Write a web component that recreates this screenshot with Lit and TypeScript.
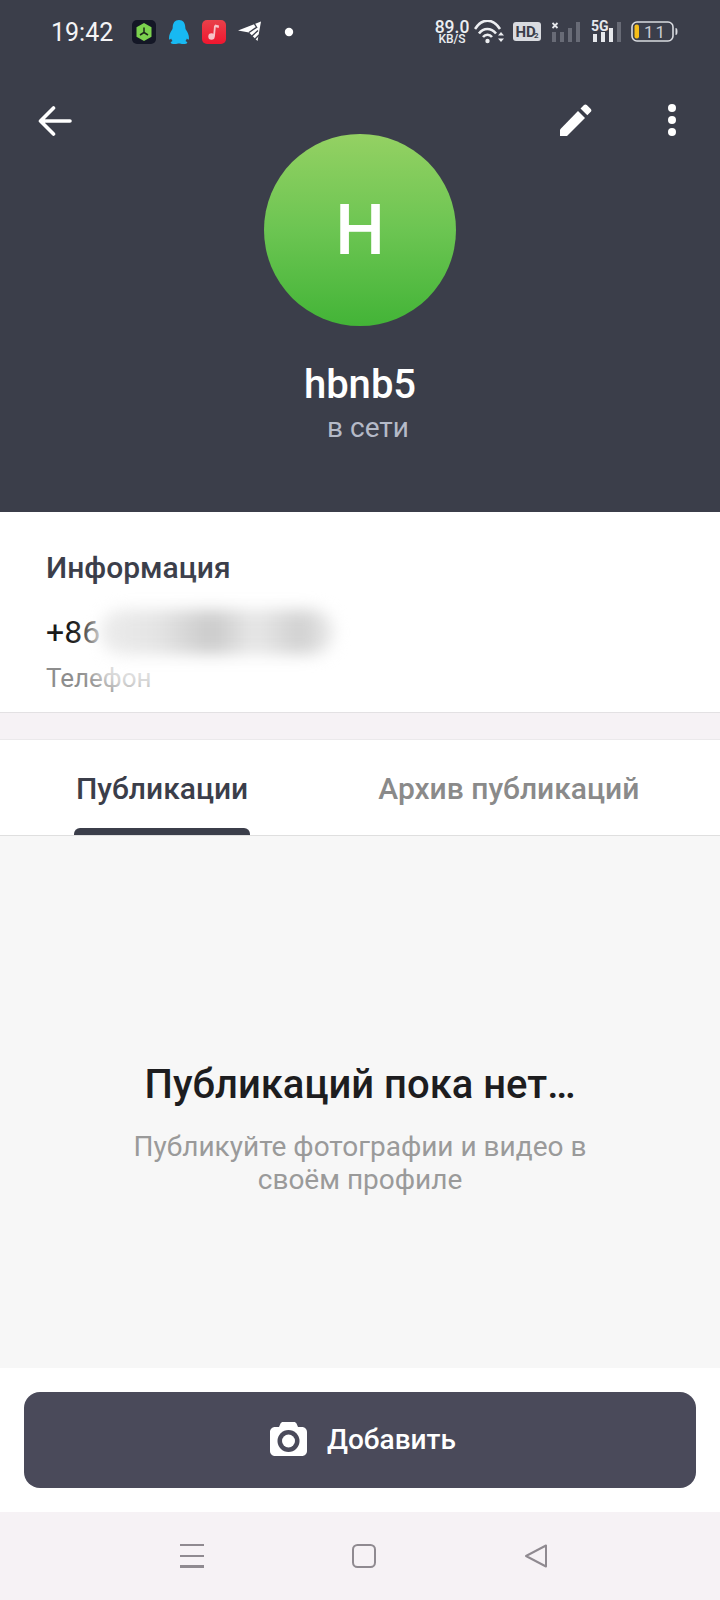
import {LitElement, html, css, svg} from 'lit';
import {customElement} from 'lit/decorators.js';

const bars = (levels: number[], on: number) =>
  levels.map((h, i) => svg`<rect x=${i * 8} y=${20 - h} width="4" height=${h} fill=${i < on ? '#e6e8ec' : '#686b76'} />`);

@customElement('app-root')
export class AppRoot extends LitElement {
  static override styles = css`
    :host {
      display: block;
      width: 720px;
      height: 1600px;
      font-family: Roboto, "Noto Sans", sans-serif;
      background: #fff;
    }

    .page {
      display: flex;
      flex-direction: column;
      height: 1600px;
    }

    .header {
      height: 512px;
      background: #3b3e4a;
      color: #fff;
      display: flex;
      flex-direction: column;
      flex: none;
    }

    .status {
      height: 64px;
      display: flex;
      align-items: center;
      padding: 0 0 0 51px;
      box-sizing: border-box;
    }

    .time {
      font-size: 25px;
      color: #f4f4f6;
      width: 81px;
    }

    .status svg {
      display: block;
      flex: none;
    }

    .speed {
      width: 36px;
      margin-left: 140px;
      text-align: center;
      font-weight: 500;
      color: #eceef1;
      font-size: 17.5px;
      line-height: 14px;
    }

    .speed small {
      display: block;
      font-size: 12px;
      line-height: 11px;
    }

    .toolbar {
      height: 70px;
      box-sizing: border-box;
      padding-top: 42px;
      display: flex;
      align-items: flex-start;
    }

    .toolbar .back {
      margin-left: 38px;
    }

    .toolbar .edit {
      margin-left: auto;
      margin-top: -2px;
    }

    .toolbar .more {
      margin: -3px 43px 0 75px;
    }

    .avatar {
      width: 192px;
      height: 192px;
      border-radius: 50%;
      align-self: center;
      flex: none;
      background: linear-gradient(180deg, #94d163 0%, #6cc552 50%, #43b437 100%);
      display: flex;
      align-items: center;
      justify-content: center;
      font-size: 70px;
      font-weight: 500;
    }

    .name {
      margin-top: 35px;
      font-size: 40px;
      line-height: 48px;
      font-weight: 500;
      text-align: center;
    }

    .presence {
      margin-top: 2px;
      padding-left: 16px;
      font-size: 28px;
      line-height: 34px;
      color: #b5bac8;
      text-align: center;
    }

    .info {
      height: 201px;
      box-sizing: border-box;
      flex: none;
      padding: 38px 46px 0;
      border-bottom: 1px solid #e3e1e3;
      position: relative;
    }

    .info h2 {
      margin: 0;
      font-size: 30px;
      line-height: 36px;
      font-weight: 500;
      color: #3b3e4a;
    }

    .phone {
      margin-top: 28px;
      font-size: 32px;
      line-height: 36px;
      color: #1a1a1a;
    }

    .label {
      margin-top: 13px;
      font-size: 26px;
      line-height: 30px;
      color: #8d8d8d;
    }

    .haze {
      position: absolute;
      left: 88px;
      top: 80px;
      width: 250px;
      height: 100px;
      border-radius: 40px;
      background: rgba(255, 255, 255, 0.72);
      filter: blur(9px);
    }

    .smudge {
      position: absolute;
      left: 100px;
      top: 98px;
      width: 234px;
      height: 44px;
      border-radius: 22px;
      background: linear-gradient(90deg, #ececec 0%, #e4e4e4 25%, #cacaca 48%, #e8e8e8 66%, #d0d0d0 86%, #ececec 100%);
      filter: blur(8px);
    }

    .gap {
      height: 26px;
      flex: none;
      background: #f6f2f5;
    }

    .tabs {
      height: 97px;
      flex: none;
      box-sizing: border-box;
      border-top: 1px solid #ebe9eb;
      border-bottom: 1px solid #dfdfdf;
      display: flex;
      font-size: 30px;
      font-weight: 500;
      background: #fff;
    }

    .tab {
      position: relative;
      display: flex;
      align-items: center;
      padding-top: 2px;
      color: #8a8a8a;
    }

    .tab.first {
      margin-left: 76px;
      color: #3b3e4a;
    }

    .tab.second {
      margin-left: 130px;
    }

    .tab.first::after {
      content: '';
      position: absolute;
      left: -2px;
      right: -2px;
      bottom: 0;
      height: 7px;
      border-radius: 6px 6px 0 0;
      background: #3b3e4a;
    }

    .empty {
      flex: 1;
      background: #f7f7f7;
      display: flex;
      flex-direction: column;
      align-items: center;
      text-align: center;
      padding-top: 225px;
    }

    .empty h3 {
      margin: 0;
      font-size: 40px;
      line-height: 48px;
      font-weight: 500;
      color: #1d1d1f;
    }

    .empty p {
      margin: 21px 0 0;
      width: 480px;
      font-size: 28px;
      line-height: 33px;
      color: #9a9a9a;
    }

    .footer {
      height: 144px;
      flex: none;
      box-sizing: border-box;
      padding: 24px;
      background: #fff;
    }

    .add {
      height: 96px;
      border-radius: 16px;
      background: #4a4a5a;
      display: flex;
      align-items: center;
      justify-content: center;
      gap: 20px;
      color: #fff;
      font-size: 28px;
      font-weight: 500;
      padding: 0 0 2px 6px;
      box-sizing: border-box;
    }

    .nav {
      height: 88px;
      flex: none;
      background: #f6f2f5;
      display: flex;
      align-items: center;
      padding-bottom: 1px;
      box-sizing: border-box;
    }

    .nav svg {
      display: block;
      flex: none;
    }

    .nav .menu { margin-left: 180px; }
    .nav .home { margin-left: 148px; }
    .nav .tri { margin-left: 148px; }
  `;

  override render() {
    return html`
      <div class="page">
        <header class="header">
          ${this.renderStatus()}
          <div class="toolbar">
            <svg class="back" width="34" height="30" viewBox="0 0 34 30" fill="none" stroke="#fff" stroke-width="3.6" stroke-linecap="round" stroke-linejoin="round">
              <path d="M32 15H3M15.5 2 2.5 15l13 13" />
            </svg>
            <svg class="edit" width="32" height="32" viewBox="0 0 32 32" fill="#fff">
              <path d="M0 32v-6.500L18 7l7 7L7 32z" />
              <path d="M20.500 4.500 24 1c.8-.8 2-.8 2.800 0l4 4c.8.800.8 2 0 2.800l-3.500 3.500z" />
            </svg>
            <svg class="more" width="10" height="34" viewBox="0 0 10 34" fill="#fff">
              <circle cx="5" cy="5" r="4" /><circle cx="5" cy="17" r="4" /><circle cx="5" cy="29" r="4" />
            </svg>
          </div>
          <div class="avatar">H</div>
          <div class="name">hbnb5</div>
          <div class="presence">в сети</div>
        </header>

        <section class="info">
          <h2>Информация</h2>
          <div class="phone">+86</div>
          <div class="label">Телефон</div>
          <div class="haze"></div>
          <div class="smudge"></div>
        </section>

        <div class="gap"></div>

        <div class="tabs">
          <div class="tab first">Публикации</div>
          <div class="tab second">Архив публикаций</div>
        </div>

        <div class="empty">
          <h3>Публикаций пока нет…</h3>
          <p>Публикуйте фотографии и видео в своём профиле</p>
        </div>

        <div class="footer">
          <div class="add">
            <svg width="37" height="34" viewBox="0 0 37 34">
              <path fill="#fff" d="M13 0h11c1.200 0 2 .6 2.500 1.600L28 5h4c2.800 0 5 2.200 5 5v19c0 2.800-2.200 5-5 5H5c-2.800 0-5-2.200-5-5V10c0-2.800 2.200-5 5-5h4l1.500-3.400C11 .6 11.800 0 13 0z" />
              <circle cx="18.500" cy="19" r="11" fill="#4a4a5a" />
              <circle cx="18.500" cy="19" r="6.500" fill="#fff" />
            </svg>
            Добавить
          </div>
        </div>

        <nav class="nav">
          <svg class="menu" width="24" height="24" viewBox="0 0 24 24" fill="#8f8a90">
            <rect y="0" width="24" height="2" /><rect y="11" width="24" height="2" /><rect y="21" width="24" height="3" />
          </svg>
          <svg class="home" width="24" height="24" viewBox="0 0 24 24" fill="none" stroke="#8f8a90" stroke-width="2">
            <rect x="1" y="1" width="22" height="22" rx="4.500" />
          </svg>
          <svg class="tri" width="24" height="24" viewBox="0 0 24 24" fill="none" stroke="#8f8a90" stroke-width="2" stroke-linejoin="round">
            <path d="M22 1.500v21L2 12z" />
          </svg>
        </nav>
      </div>
    `;
  }

  private renderStatus() {
    return html`
      <div class="status">
        <span class="time">19:42</span>
        <svg width="24" height="24" viewBox="0 0 24 24" style="margin-right:12px">
          <rect width="24" height="24" rx="5" fill="#141726" />
          <path d="M12 3 19.500 7.300v9.400L12 21l-7.500-4.300V7.300z" fill="#7bd24e" />
          <path d="M12 7.500v5M12 12.500 8 15M12 12.500l4 2.500" stroke="#1d2a1a" stroke-width="1.500" fill="none" />
        </svg>
        <svg width="22" height="24" viewBox="0 0 22 24" style="margin-right:12px">
          <path fill="#18b9f2" d="M11 0c4.200 0 6.200 3.200 6.300 7.400 0 1 .3 1.900.8 2.700 1.500 2.300 3 5 2.900 8.500-.1 1.300-1.100 1.500-2.100 0-.3.900-.8 1.800-1.400 2.500 1 .5 1.800 1 1.800 1.600 0 .9-2 1.300-4 1.300-2 0-3.100-.5-4.300-.5s-2.400.5-4.300.5c-2 0-4-.4-4-1.300 0-.6.800-1.100 1.800-1.600-.6-.7-1.100-1.600-1.400-2.500-1 1.500-2 1.300-2.100 0-.1-3.500 1.400-6.200 2.900-8.500.5-.8.800-1.700.8-2.700C4.800 3.200 6.800 0 11 0z" />
        </svg>
        <svg width="24" height="24" viewBox="0 0 24 24" style="margin-right:12px">
          <defs><linearGradient id="mu" x1="0" y1="0" x2="0" y2="1"><stop offset="0" stop-color="#e8414a" /><stop offset="1" stop-color="#f0162f" /></linearGradient></defs>
          <rect width="24" height="24" rx="5" fill="url(#mu)" />
          <path d="M13 5.500 12 16.500" stroke="#f7c2c8" stroke-width="1.800" fill="none" />
          <circle cx="9.500" cy="16.500" r="3.200" fill="#f7c2c8" />
          <path d="M13 4.500l4 1-.3 2.500-4-1z" fill="#f7c2c8" />
        </svg>
        <svg width="24" height="22" viewBox="0 0 24 22" style="margin-right:22px">
          <path fill="#fff" d="M0 9.500 23 .5 19.500 20 11 11.500z" />
          <path d="M11 11.500 19 6M14 15l6-5.500M17 18l4-4M16 2l3 5" stroke="#3b3e4a" stroke-width="1.400" fill="none" />
        </svg>
        <svg width="10" height="10" viewBox="0 0 10 10" fill="#fff"><circle cx="5" cy="5" r="4.200" /></svg>
        <span class="speed">89.0<small>KB/S</small></span>
        <svg width="30" height="24" viewBox="0 0 30 24" fill="none" stroke="#eceef1" stroke-width="2.600" style="margin-left:4px">
          <path d="M1 9c7-11 18-11 25 0M5 13.500c4.500-6 12-6 17 0M9 17c2.500-3 6.500-3 9 0" />
          <circle cx="13.500" cy="21" r="2.200" fill="#eceef1" stroke="none" />
          <path d="M24 15.500h6l-3-3.500zM24 18.500h6l-3 3.500z" fill="#eceef1" stroke="none" />
        </svg>
        <svg width="28" height="20" viewBox="0 0 28 20" style="margin-left:9px">
          <rect width="28" height="19" rx="3" fill="#d9dbe0" />
          <text x="2.500" y="15" font-family="Roboto" font-size="15" font-weight="700" fill="#3b3e4a">HD</text>
          <text x="21" y="16" font-family="Roboto" font-size="8" font-weight="700" fill="#3b3e4a">2</text>
        </svg>
        <svg width="28" height="22" viewBox="0 0 28 22" style="margin-left:11px">
          <path d="M.5 2l5 5M5.500 2l-5 5" stroke="#e6e8ec" stroke-width="1.800" />
          <g transform="translate(0 1)">${bars([10, 10, 14, 20], 0)}</g>
        </svg>
        <svg width="32" height="28" viewBox="0 0 32 28" style="margin-left:11px">
          <text x="0" y="13" font-family="Roboto" font-size="14" font-weight="700" fill="#e6e8ec">5G</text>
          <g transform="translate(2 4)">${bars([8, 10, 14, 20], 3)}</g>
        </svg>
        <svg width="48" height="22" viewBox="0 0 48 22" style="margin-left:8px">
          <rect x="1" y="1" width="41" height="19" rx="5" fill="none" stroke="#d9dbe0" stroke-width="1.600" />
          <rect x="3.500" y="3.500" width="4.500" height="14" rx="2" fill="#f5bd17" />
          <text x="13" y="17" font-family="Roboto" font-size="17" letter-spacing="2" fill="#c9ccd3">11</text>
          <path d="M44.500 7c1.500 0 2 1 2 3.500s-.5 3.500-2 3.500z" fill="#d9dbe0" />
        </svg>
      </div>
    `;
  }
}

declare global {
  interface HTMLElementTagNameMap {
    'app-root': AppRoot;
  }
}
